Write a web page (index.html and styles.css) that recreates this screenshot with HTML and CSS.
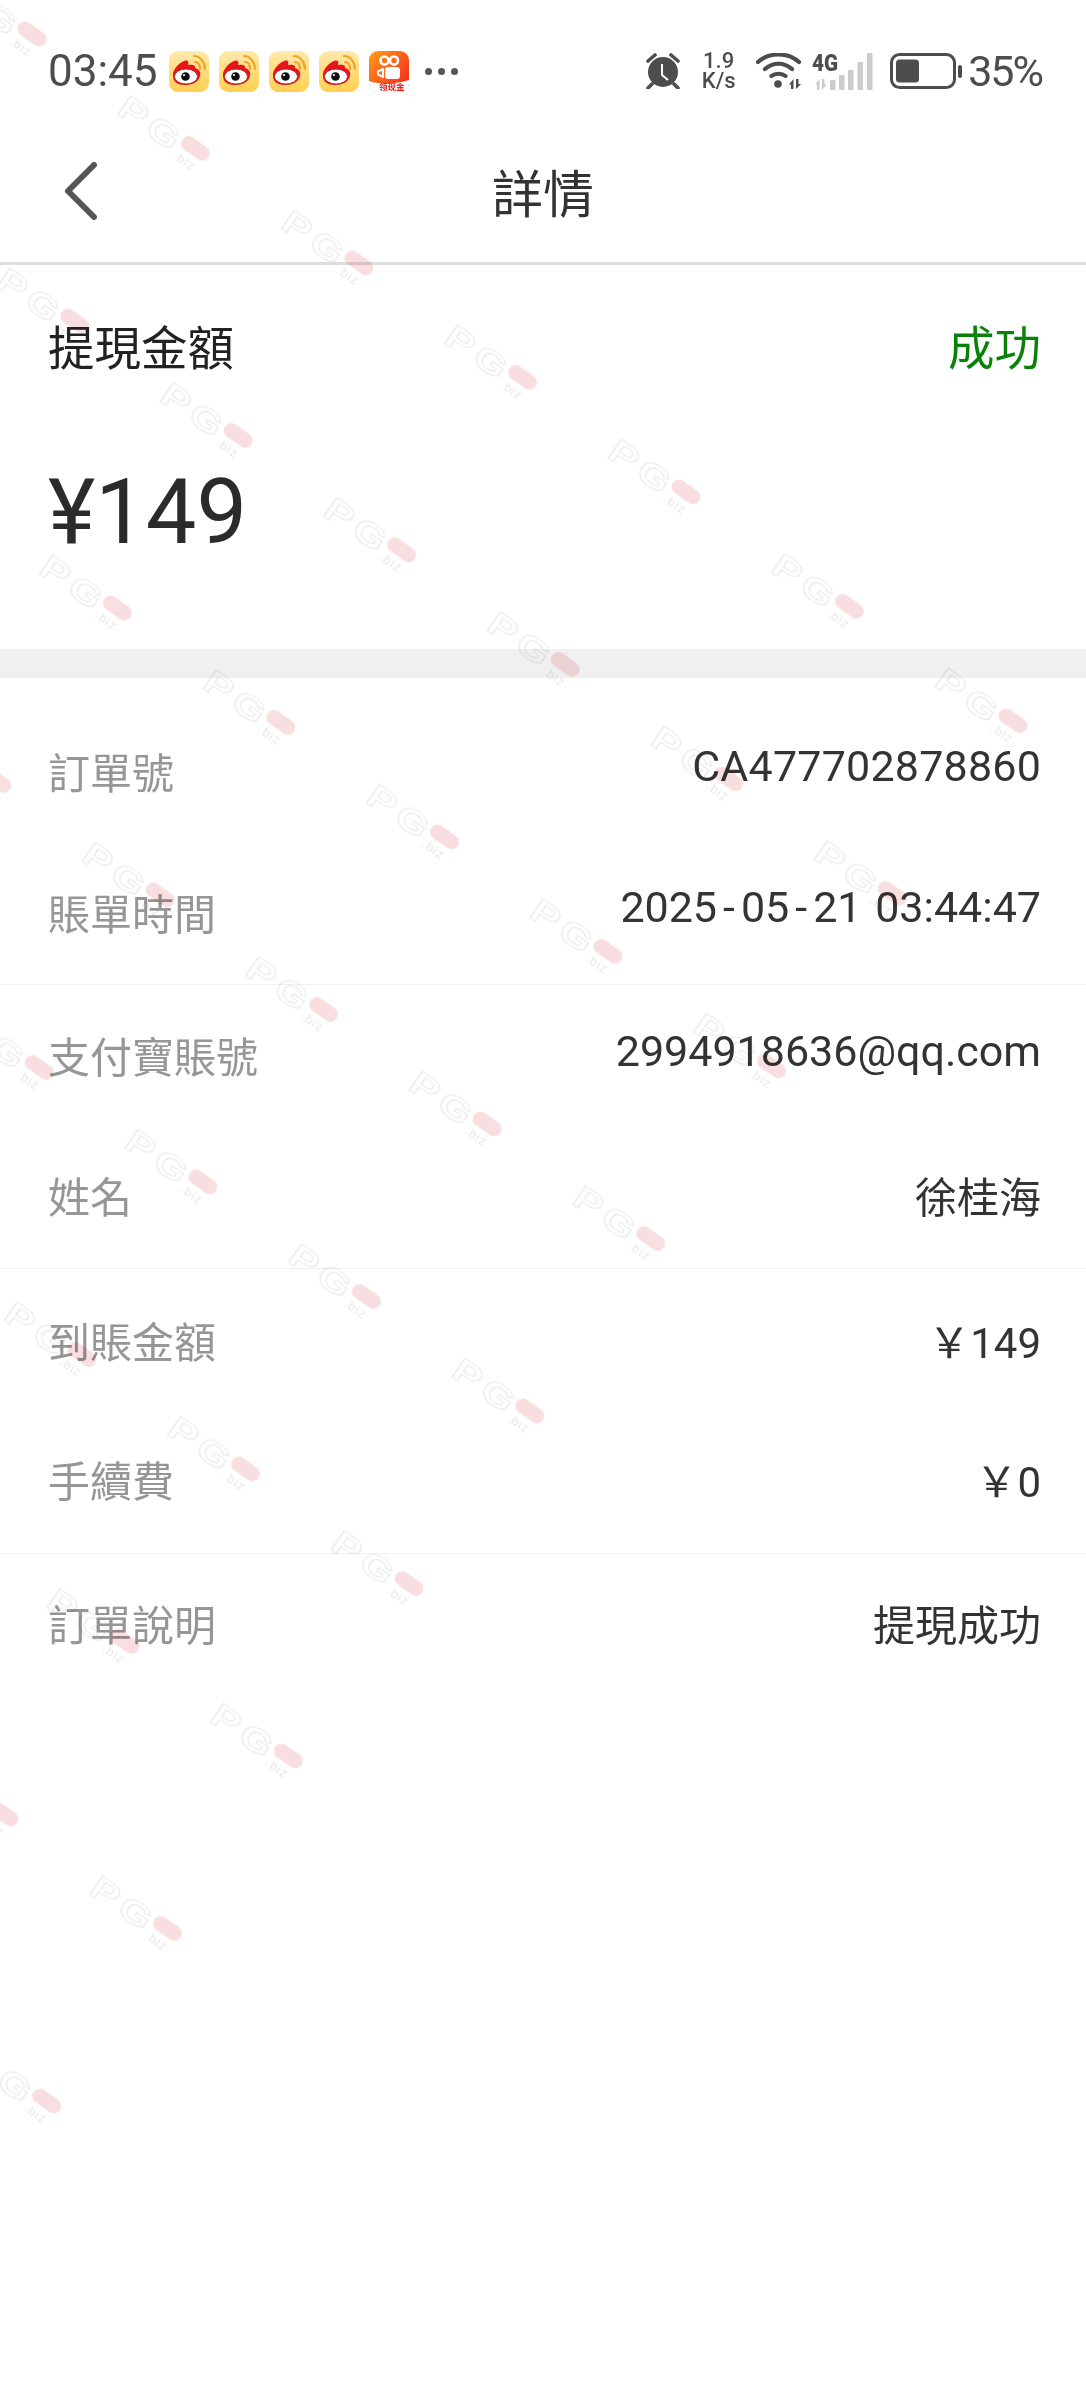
FILE: index.html
```html
<!DOCTYPE html>
<html lang="zh-Hant">
  <head>
    <meta charset="UTF-8" />
    <meta name="viewport" content="width=device-width, initial-scale=1.0" />
    <title>詳情</title>
    <link rel="stylesheet" href="styles.css">
  </head>
  <body>
    <svg width="0" height="0" class="defs">
      <defs>
        <linearGradient id="wb-bg" x1="0" y1="0" x2="0" y2="1">
          <stop offset="0" stop-color="#ffe9ae" />
          <stop offset="1" stop-color="#ffcf4e" />
        </linearGradient>
        <linearGradient id="ks-bg" x1="0" y1="0" x2="1" y2="1">
          <stop offset="0" stop-color="#ff9d17" />
          <stop offset="1" stop-color="#f3201e" />
        </linearGradient>
        <symbol id="weibo" viewBox="0 0 40 41">
          <rect width="40" height="41" rx="9" fill="url(#wb-bg)" />
          <path d="M25 5C31 5 36 11 36 18M26 11C29 11 31 14 31 18" fill="none" stroke="#f0a422" stroke-width="2.200" stroke-linecap="round" />
          <path d="M4 25C3 19 10 12 15 10C19 8.500 20 11 19 14C23 13 27 14 26 17C30 18 32 21 31 25C30 31 23 34 16 34C9 34 4 31 4 25Z" fill="#e8141c" />
          <ellipse cx="17" cy="25.500" rx="11.500" ry="7.500" fill="#fff" stroke="#a00c10" stroke-width="0.800" />
          <circle cx="16.500" cy="25.500" r="4.300" fill="#111" />
          <circle cx="15" cy="24" r="1.100" fill="#fff" />
        </symbol>
      </defs>
    </svg>

    <div class="statusbar">
      <div class="status-left">
        <span class="clock">03:45</span>
        <svg class="app-icon" viewBox="0 0 40 41"><use href="#weibo" /></svg>
        <svg class="app-icon" viewBox="0 0 40 41"><use href="#weibo" /></svg>
        <svg class="app-icon" viewBox="0 0 40 41"><use href="#weibo" /></svg>
        <svg class="app-icon" viewBox="0 0 40 41"><use href="#weibo" /></svg>
        <svg class="app-icon" viewBox="0 0 40 41">
          <rect width="40" height="41" rx="9" fill="url(#ks-bg)" />
          <path d="M0 30C12 34 28 33 40 29V32C40 37 36 41 31 41H9C4 41 0 37 0 32Z" fill="#fff" />
          <circle cx="15.500" cy="9.500" r="4" fill="none" stroke="#fff" stroke-width="2.600" />
          <circle cx="25" cy="9.500" r="4" fill="none" stroke="#fff" stroke-width="2.600" />
          <rect x="16" y="16" width="15" height="12" rx="3" fill="#fff" />
          <path d="M14 18V26L9 23.500V20.500Z" fill="none" stroke="#fff" stroke-width="2" stroke-linejoin="round" />
          <text x="10" y="39" class="ks-text">领现金</text>
        </svg>
        <span class="more-dots"><i></i><i></i><i></i></span>
      </div>
      <div class="status-right">
        <svg class="alarm" width="36" height="36" viewBox="0 0 36 36">
          <circle cx="18" cy="19" r="15" fill="#4d4d4d" />
          <path d="M3 8L10 2M33 8L26 2M7 31L3 35M29 31L33 35" stroke="#4d4d4d" stroke-width="3.600" stroke-linecap="round" />
          <path d="M17 11V22L23 27" fill="none" stroke="#fff" stroke-width="2" stroke-linejoin="round" />
        </svg>
        <div class="speed"><span>1.9</span><span>K/s</span></div>
        <svg class="wifi" width="46" height="37" viewBox="0 0 46 37">
          <path d="M2 9C13 -1 32 -1 43 9M9 16C17 9 28 9 36 16M15.500 23C19 20 26 20 29.500 23" fill="none" stroke="#4d4d4d" stroke-width="4.200" stroke-linecap="round" />
          <circle cx="22" cy="31" r="3.800" fill="#4d4d4d" />
          <path d="M33 31.500L37.500 26V36H35V31.500ZM40 26H42.500V31H45L40 36Z" fill="#4d4d4d" />
        </svg>
        <svg class="cell" width="62" height="37" viewBox="0 0 62 37">
          <text x="0" y="18" class="cell-text" textLength="26" lengthAdjust="spacingAndGlyphs">4G</text>
          <path d="M3 31.500L7.500 26V37H5V31.500ZM10 26H12.500V31.500H15L10 37Z" fill="#ccc" />
          <rect x="18" y="27" width="5.500" height="10" rx="1" fill="#ccc" />
          <rect x="27" y="22" width="5.500" height="15" rx="1" fill="#ccc" />
          <rect x="36" y="17" width="5.500" height="20" rx="1" fill="#ccc" />
          <rect x="45.500" y="9" width="5.500" height="28" rx="1" fill="#ccc" />
          <rect x="55" y="0" width="5.500" height="37" rx="1" fill="#ccc" />
        </svg>
        <svg class="battery" width="72" height="36" viewBox="0 0 72 36">
          <rect x="1.500" y="1.500" width="63" height="33" rx="8" fill="none" stroke="#4d4d4d" stroke-width="3" />
          <rect x="6" y="6.500" width="23" height="23" rx="3.500" fill="#4d4d4d" />
          <rect x="68" y="12" width="4" height="13" rx="2" fill="#4d4d4d" />
        </svg>
        <span class="percent">35%</span>
      </div>
    </div>

    <header class="navbar">
      <a class="back" href="#">
        <svg width="34" height="58" viewBox="0 0 34 58">
          <path d="M30 3L4 29L30 55" fill="none" stroke="#555" stroke-width="6" stroke-linecap="round" stroke-linejoin="round" />
        </svg>
      </a>
      <h1>詳情</h1>
    </header>

    <section class="summary">
      <div class="summary-top">
        <span>提現金額</span>
        <span class="status-ok">成功</span>
      </div>
      <div class="amount">¥149</div>
    </section>

    <div class="band"></div>

    <section class="group group-a">
      <div class="row">
        <span class="label">訂單號</span>
        <span class="value num order">CA477702878860</span>
      </div>
      <div class="row">
        <span class="label">賬單時間</span>
        <span class="value num time">2025<span class="dash">-</span>05<span class="dash">-</span>21 03:44:47</span>
      </div>
    </section>

    <section class="group group-b">
      <div class="row">
        <span class="label">支付寶賬號</span>
        <span class="value num email">2994918636@qq.com</span>
      </div>
      <div class="row">
        <span class="label">姓名</span>
        <span class="value">徐桂海</span>
      </div>
    </section>

    <section class="group group-c">
      <div class="row">
        <span class="label">到賬金額</span>
        <span class="value">￥149</span>
      </div>
      <div class="row">
        <span class="label">手續費</span>
        <span class="value">￥0</span>
      </div>
    </section>

    <section class="group group-d">
      <div class="row">
        <span class="label">訂單說明</span>
        <span class="value">提現成功</span>
      </div>
    </section>

    <svg class="watermark" width="1086" height="2400">
      <defs>
        <pattern id="wm" x="-110" y="-30" width="199.6" height="210.6" patternUnits="userSpaceOnUse">
          <g transform="translate(110 30)">
            <text transform="translate(-86 17) scale(1.3 1)" class="wm-logo">PG</text>
            <text x="-14" y="21" class="wm-biz">.biz</text>
            <rect x="-16" y="-7.500" width="32" height="15" rx="7.500" fill="#f9dee1" />
          </g>
        </pattern>
      </defs>
      <g transform="translate(32 34) rotate(35)">
        <rect x="-110" y="-30" width="1397.2" height="1895.4" fill="url(#wm)" />
      </g>
    </svg>
  </body>
</html>
```

FILE: styles.css
```css
body {
  font-family: Roboto, "Noto Sans CJK TC", sans-serif;
  background-color: white;
  color: #333;
  margin: 0;
  padding: 0;
  width: 1086px;
  height: 2400px;
  position: relative;
  overflow: hidden;
}

.defs {
  display: block;
  height: 0;
}

.statusbar {
  height: 122px;
  box-sizing: border-box;
  padding: 52px 44px 0 48px;
  display: flex;
  justify-content: space-between;
  align-items: flex-start;
  color: #4d4d4d;
}

.status-left,
.status-right {
  display: flex;
  align-items: center;
  height: 38px;
}

.clock {
  font-size: 44px;
  line-height: 38px;
  margin-right: 11px;
}

.app-icon {
  width: 40px;
  height: 41px;
  margin-right: 10px;
}

.ks-text {
  font-family: "Noto Sans CJK SC", sans-serif;
  font-size: 8.5px;
  font-weight: 700;
  fill: #e8201c;
}

.more-dots {
  display: flex;
  gap: 6px;
  margin-left: 6px;
}

.more-dots i {
  width: 7px;
  height: 7px;
  border-radius: 50%;
  background-color: #555;
}

.speed {
  display: flex;
  flex-direction: column;
  align-items: center;
  width: 37px;
  margin-left: 19px;
  font-size: 22px;
  font-weight: 500;
  line-height: 20px;
}

.wifi {
  margin-left: 19px;
}

.cell {
  margin-left: 10px;
  overflow: visible;
}

.cell-text {
  font-family: Roboto, sans-serif;
  font-size: 23px;
  font-weight: 900;
  fill: #4d4d4d;
}

.battery {
  margin-left: 16px;
}

.percent {
  font-size: 43px;
  line-height: 38px;
  letter-spacing: -2px;
  margin-left: 6px;
}

.navbar {
  height: 143px;
  box-sizing: border-box;
  padding-bottom: 3px;
  border-bottom: 3px solid #dedede;
  display: flex;
  align-items: center;
  justify-content: center;
  position: relative;
}

.navbar h1 {
  font-size: 51px;
  font-weight: 400;
  color: #333;
  margin: 0;
}

.back {
  position: absolute;
  left: 64px;
  top: 40px;
  line-height: 0;
}

.summary {
  height: 384px;
  box-sizing: border-box;
  padding: 58px 45px 0 48px;
}

.summary-top {
  display: flex;
  justify-content: space-between;
  font-size: 46.5px;
  line-height: 52px;
  color: #222;
}

.status-ok {
  color: #0a820a;
}

.amount {
  font-size: 90px;
  line-height: 100px;
  color: #2b2b2b;
  margin-top: 88px;
}

.band {
  height: 29px;
  background-color: #f0f0f0;
}

.group {
  padding: 0 45px 0 48px;
  border-bottom: 1px solid #f2f2f2;
  display: flex;
  flex-direction: column;
}

.group-a {
  padding-top: 73px;
  padding-bottom: 44px;
  gap: 93px;
}

.group-b {
  padding-top: 50px;
  padding-bottom: 45px;
  gap: 92px;
}

.group-c {
  padding-top: 51px;
  padding-bottom: 46px;
  gap: 91px;
}

.group-d {
  padding-top: 49px;
  border-bottom: none;
}

.row {
  display: flex;
  justify-content: space-between;
  align-items: flex-start;
  height: 48px;
  font-size: 42px;
  line-height: 48px;
}

.label {
  color: #969696;
}

.value {
  color: #333;
}

.num {
  font-size: 43px;
}

.order {
  margin-top: -9px;
  letter-spacing: 0.2px;
}

.time {
  margin-top: -9px;
  word-spacing: 3px;
}

.dash {
  margin: 0 6px;
}

.email {
  margin-top: -8px;
}

.watermark {
  position: absolute;
  top: 0;
  left: 0;
  pointer-events: none;
  mix-blend-mode: multiply;
}

.wm-logo {
  font-family: "Liberation Sans", sans-serif;
  font-size: 33px;
  font-weight: 700;
  letter-spacing: 4.4px;
  fill: none;
  stroke: #ececec;
  stroke-width: 1.2px;
}

.wm-biz {
  font-family: "Liberation Sans", sans-serif;
  font-size: 13px;
  letter-spacing: 1px;
  fill: #e8e8e8;
}
```
